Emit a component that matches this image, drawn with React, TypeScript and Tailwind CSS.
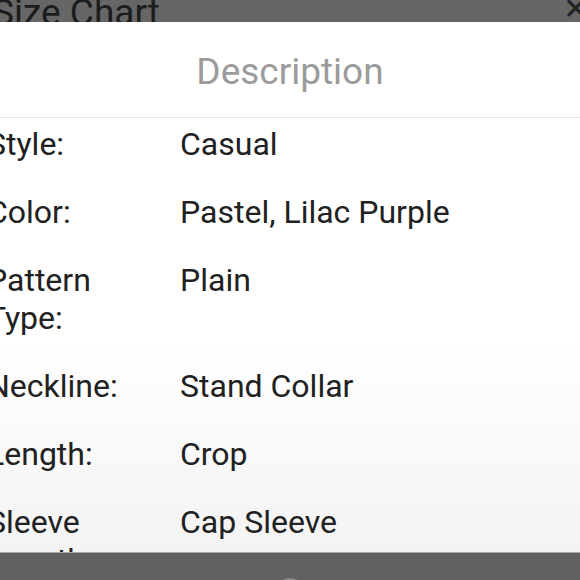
const rows: [string, string][] = [
  ['Style:', 'Casual'],
  ['Color:', 'Pastel, Lilac Purple'],
  ['Pattern Type:', 'Plain'],
  ['Neckline:', 'Stand Collar'],
  ['Length:', 'Crop'],
  ['Sleeve Length:', 'Cap Sleeve'],
]

export default function App() {
  return (
    <div
      className="relative w-[580px] h-[580px] overflow-hidden bg-[#666666] flex flex-col"
      style={{ fontFamily: 'Roboto, "Noto Sans", sans-serif' }}
    >
      {/* dimmed sheet behind */}
      <div className="h-[22px] shrink-0 flex items-end justify-between overflow-hidden">
        <span className="ml-[-8px] text-[37px] leading-none text-[#1c1c1c] mb-[-9px]">
          Size Chart
        </span>
        <span className="mr-[-8px] text-[30px] leading-none text-[#222] mb-[-2px]">✕</span>
      </div>

      {/* description sheet */}
      <div className="h-[530px] shrink-0 flex flex-col overflow-hidden bg-linear-to-b from-white via-white via-60% to-[#f3f3f3]">
        <div className="h-[96px] shrink-0 flex items-center justify-center pt-[5px] border-b border-[#e3e3e3]">
          <span className="text-[37px] text-[#9b9b9b]">Description</span>
        </div>
        <div className="pt-[7px] flex flex-col gap-[30px]">
          {rows.map(([label, value]) => (
            <div key={label} className="flex text-[32px] leading-[38px] text-[#212121]">
              <div className="ml-[-13px] w-[193px] shrink-0 pr-[10px]">{label}</div>
              <div className="flex-1">{value}</div>
            </div>
          ))}
        </div>
      </div>

      {/* navigation bar */}
      <div className="flex-1 border-t border-[#a8a8a8] bg-[#616161] flex justify-center">
        <div className="mt-[25px] w-[26px] h-[26px] rounded-full bg-[#8a8a8a]" />
      </div>
    </div>
  )
}
